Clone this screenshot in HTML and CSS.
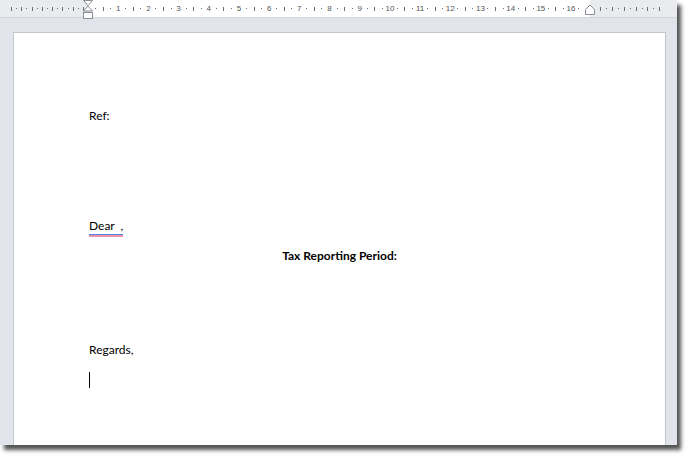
FILE: index.html
```html
<!DOCTYPE html>
<html>
<head>
<meta charset="utf-8">
<link rel="stylesheet" href="styles.css">
</head>
<body>
<div class="window">
  <div class="ruler">
    <div class="margin-l">
      <i class="t"></i><i class="d"></i><i class="t"></i><i class="d"></i><i class="t"></i><i class="d"></i><i class="t"></i><i class="d"></i><i class="t"></i><i class="d"></i><i class="t"></i><i class="d"></i><i class="t"></i><i class="d"></i><i class="t"></i>
    </div>
    <div class="scale">
      <span class="slot"></span><span class="slot"><i class="d"></i></span><span class="slot"><i class="t"></i></span><span class="slot"><i class="d"></i></span>
      <span class="slot">1</span><span class="slot"><i class="d"></i></span><span class="slot"><i class="t"></i></span><span class="slot"><i class="d"></i></span>
      <span class="slot">2</span><span class="slot"><i class="d"></i></span><span class="slot"><i class="t"></i></span><span class="slot"><i class="d"></i></span>
      <span class="slot">3</span><span class="slot"><i class="d"></i></span><span class="slot"><i class="t"></i></span><span class="slot"><i class="d"></i></span>
      <span class="slot">4</span><span class="slot"><i class="d"></i></span><span class="slot"><i class="t"></i></span><span class="slot"><i class="d"></i></span>
      <span class="slot">5</span><span class="slot"><i class="d"></i></span><span class="slot"><i class="t"></i></span><span class="slot"><i class="d"></i></span>
      <span class="slot">6</span><span class="slot"><i class="d"></i></span><span class="slot"><i class="t"></i></span><span class="slot"><i class="d"></i></span>
      <span class="slot">7</span><span class="slot"><i class="d"></i></span><span class="slot"><i class="t"></i></span><span class="slot"><i class="d"></i></span>
      <span class="slot">8</span><span class="slot"><i class="d"></i></span><span class="slot"><i class="t"></i></span><span class="slot"><i class="d"></i></span>
      <span class="slot">9</span><span class="slot"><i class="d"></i></span><span class="slot"><i class="t"></i></span><span class="slot"><i class="d"></i></span>
      <span class="slot">10</span><span class="slot"><i class="d"></i></span><span class="slot"><i class="t"></i></span><span class="slot"><i class="d"></i></span>
      <span class="slot">11</span><span class="slot"><i class="d"></i></span><span class="slot"><i class="t"></i></span><span class="slot"><i class="d"></i></span>
      <span class="slot">12</span><span class="slot"><i class="d"></i></span><span class="slot"><i class="t"></i></span><span class="slot"><i class="d"></i></span>
      <span class="slot">13</span><span class="slot"><i class="d"></i></span><span class="slot"><i class="t"></i></span><span class="slot"><i class="d"></i></span>
      <span class="slot">14</span><span class="slot"><i class="d"></i></span><span class="slot"><i class="t"></i></span><span class="slot"><i class="d"></i></span>
      <span class="slot">15</span><span class="slot"><i class="d"></i></span><span class="slot"><i class="t"></i></span><span class="slot"><i class="d"></i></span>
      <span class="slot">16</span><span class="slot"><i class="d"></i></span>
    </div>
    <div class="margin-r">
      <i class="t"></i><i class="d"></i><i class="t"></i><i class="d"></i><i class="t"></i><i class="d"></i><i class="t"></i><i class="d"></i><i class="t"></i><i class="d"></i><i class="t"></i>
    </div>
    <svg class="indent-left" width="12" height="20" viewBox="0 0 12 20">
      <path d="M1.5 0.5 H10.5 L6 5.5 Z" fill="#fff" stroke="#8a8f96"/>
      <path d="M6 6 L10.5 11 H1.5 Z" fill="#fff" stroke="#8a8f96"/>
      <rect x="1.5" y="12.5" width="9" height="6" fill="#fff" stroke="#8a8f96"/>
    </svg>
    <svg class="indent-right" width="12" height="12" viewBox="0 0 12 12">
      <path d="M1.5 10.5 V5.5 L6 1 L10.5 5.5 V10.5 Z" fill="#fff" stroke="#8a8f96"/>
    </svg>
  </div>
  <div class="workspace">
    <div class="page">
      <p class="line ref">Ref:</p>
      <p class="line dear"><span class="spell">Dear&nbsp; ,</span></p>
      <p class="line title">Tax Reporting Period:</p>
      <p class="line regards">Regards,</p>
      <p class="line cursor-line"><span class="cursor"></span></p>
    </div>
  </div>
</div>
</body>
</html>
```

FILE: styles.css
```css
html, body {
  margin: 0;
  padding: 0;
  background: #ffffff;
}
body {
  width: 690px;
  height: 458px;
  overflow: hidden;
}
.window {
  width: 677px;
  height: 445px;
  background: #e1e4ea;
  box-shadow: 4px 5px 4px rgba(40, 40, 40, 0.8);
  overflow: hidden;
  display: flex;
  flex-direction: column;
}
.ruler {
  position: relative;
  height: 17px;
  flex: none;
  display: flex;
  align-items: center;
  background: linear-gradient(to right, #e9ebef 88px, #ffffff 88px, #ffffff 590px, #e9ebef 590px);
  border-bottom: 1px solid #d3d7dd;
  font-family: "Liberation Sans", Arial, sans-serif;
  font-size: 8px;
  color: #50545a;
}
.ruler i {
  display: block;
}
.ruler i.d {
  width: 1px;
  height: 1px;
  background: #6b7078;
}
.ruler i.t {
  width: 1px;
  height: 4px;
  background: #6b7078;
}
.margin-l {
  width: 78px;
  margin-left: 11px;
  display: flex;
  align-items: center;
  justify-content: space-between;
  padding-right: 5px;
  box-sizing: border-box;
  height: 100%;
}
.scale {
  display: flex;
  align-items: center;
  height: 100%;
  margin-left: -4.775px;
}
.slot {
  width: 7.55px;
  flex: none;
  display: flex;
  justify-content: center;
  align-items: center;
  height: 100%;
  white-space: nowrap;
}
.margin-r {
  display: flex;
  align-items: center;
  justify-content: space-between;
  width: 60px;
  margin-left: 18px;
  height: 100%;
}
.indent-left {
  position: absolute;
  left: 82px;
  top: 0;
}
.indent-right {
  position: absolute;
  left: 584px;
  top: 4px;
}
.workspace {
  flex: 1;
  padding: 14px 0 0 13px;
  overflow: hidden;
}
.page {
  width: 653px;
  height: 460px;
  background: #ffffff;
  border: 1px solid #c3c8cf;
  box-sizing: border-box;
  padding: 75px 75px 0 75px;
  font-family: Lato, "Open Sans", sans-serif;
  font-size: 12px;
  color: #000;
}
.line {
  margin: 0;
  line-height: 16px;
  height: 16px;
}
.dear {
  margin-top: 94px;
}
.spell {
  display: inline-block;
  line-height: 14px;
  padding-bottom: 4px;
  background:
    linear-gradient(#4f86f0, #4f86f0) left bottom 2px / 100% 1px no-repeat,
    linear-gradient(#ec93a8, #ec93a8) left bottom 0 / 100% 2px no-repeat;
}
.title {
  margin-top: 14px;
  text-align: center;
  font-weight: bold;
}
.regards {
  margin-top: 78px;
}
.cursor-line {
  margin-top: 14px;
}
.cursor {
  display: inline-block;
  width: 1px;
  height: 16px;
  background: #000;
  vertical-align: top;
}
```
